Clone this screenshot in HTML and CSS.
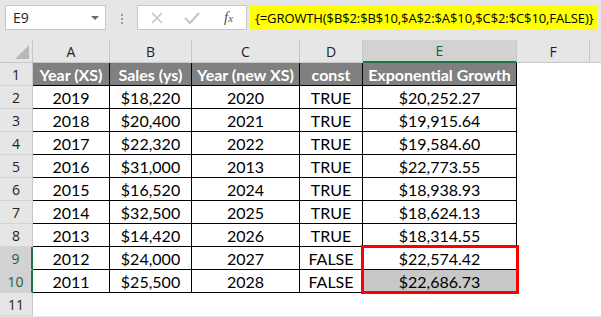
FILE: index.html
```html
<!DOCTYPE html>
<html lang="en">
<head>
  <meta charset="UTF-8" />
  <title>GROWTH - Excel</title>
  <link rel="stylesheet" href="styles.css">
</head>
<body>
  <div class="toolbar">
    <div class="name-box">
      <span>E9</span>
      <span class="drop"></span>
    </div>
    <div class="grip"></div>
    <div class="fx-box">
      <svg width="14" height="14" viewBox="0 0 14 14"><path d="M2 2 L12 12 M12 2 L2 12" stroke="#c4c4c4" stroke-width="1.6" fill="none"/></svg>
      <svg width="16" height="14" viewBox="0 0 16 14"><path d="M1 7 L6 12 L15 2" stroke="#c4c4c4" stroke-width="2" fill="none"/></svg>
      <span class="fx">f<sub>x</sub></span>
    </div>
    <div class="formula">{=GROWTH($B$2:$B$10,$A$2:$A$10,$C$2:$C$10,FALSE)}</div>
  </div>

  <div class="sheet">
    <div class="corner"><span class="tri"></span></div>
    <div class="col-head">A</div>
    <div class="col-head">B</div>
    <div class="col-head">C</div>
    <div class="col-head">D</div>
    <div class="col-head sel">E</div>
    <div class="col-head">F</div>
    <div class="col-head end"></div>

    <div class="row-head">1</div>
    <div class="cell th">Year (XS)</div>
    <div class="cell th">Sales (ys)</div>
    <div class="cell th">Year (new XS)</div>
    <div class="cell th">const</div>
    <div class="cell th">Exponential Growth</div>
    <div class="blank"></div><div class="blank"></div>

    <div class="row-head">2</div>
    <div class="cell">2019</div><div class="cell">$18,220</div><div class="cell">2020</div><div class="cell">TRUE</div><div class="cell">$20,252.27</div>
    <div class="blank"></div><div class="blank"></div>

    <div class="row-head">3</div>
    <div class="cell">2018</div><div class="cell">$20,400</div><div class="cell">2021</div><div class="cell">TRUE</div><div class="cell">$19,915.64</div>
    <div class="blank"></div><div class="blank"></div>

    <div class="row-head">4</div>
    <div class="cell">2017</div><div class="cell">$22,320</div><div class="cell">2022</div><div class="cell">TRUE</div><div class="cell">$19,584.60</div>
    <div class="blank"></div><div class="blank"></div>

    <div class="row-head">5</div>
    <div class="cell">2016</div><div class="cell">$31,000</div><div class="cell">2013</div><div class="cell">TRUE</div><div class="cell">$22,773.55</div>
    <div class="blank"></div><div class="blank"></div>

    <div class="row-head">6</div>
    <div class="cell">2015</div><div class="cell">$16,520</div><div class="cell">2024</div><div class="cell">TRUE</div><div class="cell">$18,938.93</div>
    <div class="blank"></div><div class="blank"></div>

    <div class="row-head">7</div>
    <div class="cell">2014</div><div class="cell">$32,500</div><div class="cell">2025</div><div class="cell">TRUE</div><div class="cell">$18,624.13</div>
    <div class="blank"></div><div class="blank"></div>

    <div class="row-head">8</div>
    <div class="cell">2013</div><div class="cell">$14,420</div><div class="cell">2026</div><div class="cell">TRUE</div><div class="cell">$18,314.55</div>
    <div class="blank"></div><div class="blank"></div>

    <div class="row-head sel">9</div>
    <div class="cell">2012</div><div class="cell">$24,000</div><div class="cell">2027</div><div class="cell">FALSE</div>
    <div class="cell sel-top">$22,574.42<div class="selection"></div></div>
    <div class="blank"></div><div class="blank"></div>

    <div class="row-head sel">10</div>
    <div class="cell">2011</div><div class="cell">$25,500</div><div class="cell">2028</div><div class="cell">FALSE</div><div class="cell active">$22,686.73</div>
    <div class="blank"></div><div class="blank"></div>

    <div class="row-head">11</div>
    <div class="blank"></div><div class="blank"></div><div class="blank"></div><div class="blank"></div><div class="blank"></div><div class="blank"></div><div class="blank"></div>
  </div>
</body>
</html>
```

FILE: styles.css
```css
body {
  margin: 0;
  width: 601px;
  height: 317px;
  overflow: hidden;
  background: #e6e6e6;
  font-family: 'Lato', 'Noto Sans', sans-serif;
  color: #000;
}

/* formula bar */
.toolbar {
  height: 40px;
  display: flex;
  align-items: flex-start;
  padding: 5px 4px 0 5px;
  box-sizing: border-box;
}

.name-box {
  width: 101px;
  height: 25px;
  box-sizing: border-box;
  background: #fff;
  border: 1px solid #c6c6c6;
  display: flex;
  align-items: center;
  justify-content: space-between;
  padding: 0 6px 0 7px;
  font-family: 'Open Sans', sans-serif;
  font-size: 14px;
  color: #222;
}

.drop {
  width: 0;
  height: 0;
  border-left: 4px solid transparent;
  border-right: 4px solid transparent;
  border-top: 4px solid #6a6a6a;
}

.grip {
  width: 2px;
  height: 10px;
  margin: 9px 14px 0 15px;
  background: repeating-linear-gradient(#9a9a9a 0 2px, transparent 2px 4px);
}

.fx-box {
  width: 110px;
  height: 25px;
  box-sizing: border-box;
  background: #fff;
  border: 1px solid #c6c6c6;
  display: flex;
  align-items: center;
  gap: 20px;
  padding: 0 0 0 12px;
}

.fx {
  font-family: 'Liberation Serif', serif;
  font-style: italic;
  font-size: 15px;
  color: #555;
  margin-left: 4px;
}

.fx sub {
  font-size: 11px;
  vertical-align: 0;
}

.formula {
  flex: 1;
  margin-left: 3px;
  height: 25px;
  background: #ffff00;
  display: flex;
  align-items: center;
  padding-left: 5px;
  font-family: 'Open Sans', sans-serif;
  font-size: 13px;
  letter-spacing: -0.1px;
  white-space: nowrap;
  overflow: hidden;
}

/* grid */
.sheet {
  display: grid;
  grid-template-columns: 33px 77px 82px 108px 63px 154px 73px 11px;
  grid-template-rows: repeat(12, 23px);
  background: #fff;
  font-size: 16px;
}

.corner {
  background: #e6e6e6;
  border-right: 1px solid #c8c8c8;
  border-bottom: 1px solid #c8c8c8;
  position: relative;
}

.tri {
  position: absolute;
  right: 3px;
  bottom: 3px;
  width: 0;
  height: 0;
  border-left: 14px solid transparent;
  border-bottom: 14px solid #b9b9b9;
}

.col-head {
  background: #e6e6e6;
  border-right: 1px solid #c8c8c8;
  border-bottom: 1px solid #c8c8c8;
  display: flex;
  align-items: center;
  justify-content: center;
  font-family: 'Open Sans', sans-serif;
  font-size: 14px;
  color: #222;
}

.col-head.sel {
  background: #d2d2d2;
  border-bottom: 2px solid #217346;
  color: #1e5e3a;
}

.col-head.end {
  border-right: none;
}

.row-head {
  background: #e6e6e6;
  border-right: 1px solid #c8c8c8;
  border-bottom: 1px solid #d4d4d4;
  display: flex;
  align-items: center;
  justify-content: center;
  font-family: 'Open Sans', sans-serif;
  font-size: 14px;
  color: #222;
}

.row-head.sel {
  background: #d2d2d2;
  border-right: 2px solid #217346;
  color: #1e5e3a;
}

.cell {
  border-right: 1px solid #000;
  border-bottom: 1px solid #000;
  display: flex;
  align-items: center;
  justify-content: center;
  white-space: nowrap;
  overflow: hidden;
}

.cell.th {
  background: #808080;
  color: #fff;
  font-weight: bold;
}

.cell.active {
  background: #c8c8c8;
}

.cell.sel-top {
  position: relative;
  overflow: visible;
  z-index: 1;
}

.selection {
  position: absolute;
  left: -2px;
  top: -2px;
  width: 158px;
  height: 49px;
  box-sizing: border-box;
  border: 3px solid #f00;
  pointer-events: none;
}
```
